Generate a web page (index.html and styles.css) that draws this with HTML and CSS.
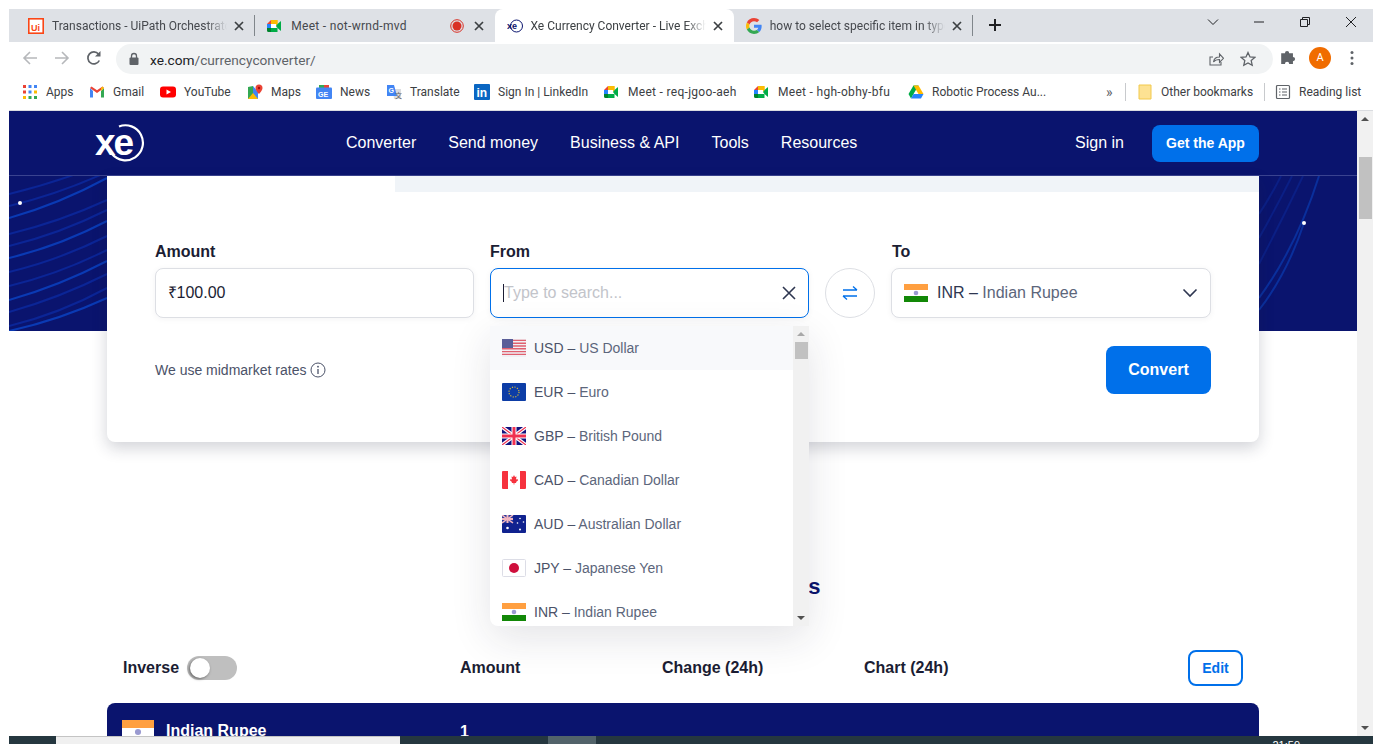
FILE: index.html
```html
<!DOCTYPE html>
<html lang="en">
<head>
  <meta charset="UTF-8">
  <title>Xe Currency Converter - Live Exchange Rates</title>
  <link rel="stylesheet" href="styles.css">
</head>
<body>
  <svg class="defs" width="0" height="0">
    <symbol id="meet" viewBox="0 0 16 16">
      <path fill="#fbbc04" d="M4 2h6.500v4H4z"/>
      <path fill="#ea4335" d="M4 2v4H0z"/>
      <path fill="#2684fc" d="M0 6h4v4H0z"/>
      <path fill="#00832d" d="M0 10h4v4H1.500A1.500 1.500 0 0 1 0 12.500z"/>
      <path fill="#00ac47" d="M4 10h6.500v4H4z"/>
      <path fill="#ffba00" d="M10.500 2v4l-1.500 2V3.500z"/>
      <path fill="#00ac47" d="M9 8l1.500-2 3.500-3v10l-3.500-3z"/>
      <path fill="#fff" d="M4 6h5v4H4z"/>
    </symbol>
    <symbol id="flag-in" viewBox="0 0 24 18">
      <rect width="24" height="6" fill="#ff9f40"/>
      <rect y="6" width="24" height="6" fill="#fff"/>
      <rect y="12" width="24" height="6" fill="#128807"/>
      <circle cx="12" cy="9" r="2.300" fill="#9a9ad0"/>
    </symbol>
    <symbol id="close" viewBox="0 0 12 12">
      <path d="M2 2l8 8M10 2l-8 8" fill="none" stroke="currentColor" stroke-width="1.700"/>
    </symbol>
    <symbol id="bar-up" viewBox="0 0 16 16"><path d="M4 10l4-4 4 4z" fill="#505050"/></symbol>
    <symbol id="bar-down" viewBox="0 0 16 16"><path d="M4 6l4 4 4-4z" fill="#505050"/></symbol>
  </svg>

  <div class="tabstrip">
    <div class="tab sep">
      <svg class="favicon" viewBox="0 0 16 16"><rect x=".8" y=".8" width="14.400" height="14.400" fill="#fff" stroke="#fa4616" stroke-width="1.600"/><text x="3" y="12.500" class="ui-mark">Ui</text></svg>
      <span class="tab-title">Transactions - UiPath Orchestrator</span>
      <svg class="tab-x"><use href="#close"/></svg>
    </div>
    <div class="tab">
      <svg class="favicon"><use href="#meet"/></svg>
      <span class="tab-title tab-title-short">Meet - not-wrnd-mvd</span>
      <svg class="rec" viewBox="0 0 14 14"><circle cx="7" cy="7" r="6.300" fill="none" stroke="#d93025"/><circle cx="7" cy="7" r="4.500" fill="#d93025"/></svg>
      <svg class="tab-x"><use href="#close"/></svg>
    </div>
    <div class="tab tab-active">
      <svg class="favicon" viewBox="0 0 16 16"><circle cx="9.500" cy="8" r="6" fill="none" stroke="#0a146e"/><text x="0" y="11" class="xe-mark">xe</text></svg>
      <span class="tab-title">Xe Currency Converter - Live Exchange Rates</span>
      <svg class="tab-x"><use href="#close"/></svg>
    </div>
    <div class="tab sep">
      <svg class="favicon" viewBox="0 0 48 48">
        <path fill="#EA4335" d="M24 9.500c3.540 0 6.710 1.220 9.210 3.600l6.850-6.850C35.900 2.380 30.470 0 24 0 14.620 0 6.510 5.380 2.560 13.220l7.980 6.190C12.430 13.720 17.740 9.500 24 9.500z"/>
        <path fill="#4285F4" d="M46.980 24.550c0-1.570-.15-3.090-.38-4.550H24v9.020h12.940c-.58 2.960-2.260 5.480-4.780 7.180l7.730 6c4.510-4.180 7.090-10.360 7.090-17.650z"/>
        <path fill="#FBBC05" d="M10.530 28.590c-.48-1.450-.76-2.990-.76-4.590s.27-3.140.76-4.590l-7.980-6.190C.92 16.460 0 20.120 0 24c0 3.880.92 7.540 2.560 10.780l7.970-6.190z"/>
        <path fill="#34A853" d="M24 48c6.480 0 11.930-2.130 15.890-5.810l-7.730-6c-2.150 1.450-4.920 2.300-8.160 2.300-6.260 0-11.570-4.220-13.470-9.910l-7.980 6.190C6.510 42.620 14.620 48 24 48z"/>
      </svg>
      <span class="tab-title">how to select specific item in typeahead</span>
      <svg class="tab-x"><use href="#close"/></svg>
    </div>
    <svg class="newtab" viewBox="0 0 14 14"><path d="M7 1v12M1 7h12" stroke="#202124" stroke-width="2"/></svg>
    <div class="winctl">
      <svg viewBox="0 0 12 12"><path d="M1 3.500l5 5 5-5" fill="none" stroke="#202124"/></svg>
      <svg viewBox="0 0 12 12"><path d="M1 6h10" stroke="#202124"/></svg>
      <svg viewBox="0 0 12 12"><path d="M1.500 3.500h7v7h-7zM3.500 3.500v-2h7v7h-2" fill="none" stroke="#202124"/></svg>
      <svg viewBox="0 0 12 12"><path d="M1 1l10 10M11 1L1 11" stroke="#202124"/></svg>
    </div>
  </div>

  <div class="toolbar">
    <svg class="nav-btn" viewBox="0 0 16 16"><path d="M15 8H2M8 2L2 8l6 6" fill="none" stroke="#b6b8bb" stroke-width="1.600"/></svg>
    <svg class="nav-btn" viewBox="0 0 16 16"><path d="M1 8h13M8 2l6 6-6 6" fill="none" stroke="#b6b8bb" stroke-width="1.600"/></svg>
    <svg class="nav-btn" viewBox="0 0 16 16"><path d="M13.300 10.500A6 6 0 1 1 12.500 4" fill="none" stroke="#5f6368" stroke-width="1.700"/><path d="M14.500 1v5.500H9z" fill="#5f6368"/></svg>
    <div class="omnibox">
      <svg class="lock" viewBox="0 0 12 14"><path d="M3.500 6V4a2.500 2.500 0 0 1 5 0v2" fill="none" stroke="#5f6368" stroke-width="1.300"/><rect x="1.500" y="5.500" width="9" height="7.500" rx="1" fill="#5f6368"/></svg>
      <span class="url"><b>xe.com</b>/currencyconverter/</span>
      <svg class="omni-icon" viewBox="0 0 16 16"><path d="M5 6H2v8h11v-3" fill="none" stroke="#5f6368" stroke-width="1.100"/><path d="M5.500 11c.5-3.500 3-5 6-5V3l4 4.300-4 4V8.500c-2.500 0-4.500 .5-6 2.500z" fill="none" stroke="#5f6368" stroke-width="1.100"/></svg>
      <svg class="omni-icon" viewBox="0 0 16 16"><path d="M8 1.500l2 4.400 4.800.5-3.600 3.200 1 4.700L8 11.900l-4.200 2.400 1-4.700L1.200 6.400 6 5.900z" fill="none" stroke="#5f6368" stroke-width="1.300"/></svg>
    </div>
    <svg class="ext" viewBox="0 0 16 16"><path d="M1 5h3.500a2 2 0 1 1 4 0H12v3.500a2 2 0 1 1 0 4V15H8.500a2 2 0 1 0-4 0H1z" fill="#5f6368" transform="translate(1 -1) scale(.95)"/></svg>
    <div class="avatar">A</div>
    <svg class="dots" viewBox="0 0 4 16"><circle cx="2" cy="2.500" r="1.500" fill="#5f6368"/><circle cx="2" cy="8" r="1.500" fill="#5f6368"/><circle cx="2" cy="13.500" r="1.500" fill="#5f6368"/></svg>
  </div>

  <div class="bookmarks">
    <div class="bm">
      <svg class="bm-ico" viewBox="0 0 16 16">
        <g fill="#ea4335"><rect x="1" y="1" width="3" height="3"/><rect x="1" y="6.500" width="3" height="3"/></g>
        <g fill="#4285f4"><rect x="6.500" y="1" width="3" height="3"/><rect x="12" y="1" width="3" height="3"/><rect x="6.500" y="6.500" width="3" height="3"/></g>
        <g fill="#fbbc04"><rect x="12" y="6.500" width="3" height="3"/><rect x="1" y="12" width="3" height="3"/></g>
        <g fill="#34a853"><rect x="6.500" y="12" width="3" height="3"/><rect x="12" y="12" width="3" height="3"/></g>
      </svg>Apps
    </div>
    <div class="bm">
      <svg class="bm-ico" viewBox="0 0 16 16"><path d="M1 4v9.500h3V7z" fill="#4285f4"/><path d="M12 7v6.500h3V4z" fill="#34a853"/><path d="M1 4l7 5 7-5-1.500-1.500L8 6.300 2.500 2.500z" fill="#ea4335"/><path d="M13.500 2.500L15 4l-3 3V4z" fill="#fbbc04"/></svg>Gmail
    </div>
    <div class="bm">
      <svg class="bm-ico" viewBox="0 0 16 16"><rect y="2.500" width="16" height="11" rx="3" fill="#f00"/><path d="M6.500 5.500v5L11 8z" fill="#fff"/></svg>YouTube
    </div>
    <div class="bm">
      <svg class="bm-ico" viewBox="0 0 16 16"><path d="M1 3l5-1v12l-5 1z" fill="#34a853"/><path d="M6 2v12l5 1V8z" fill="#4285f4"/><path d="M1 15l5-6 5 6z" fill="#fbbc04"/><path d="M12 .5a3.500 3.500 0 0 0-3.500 3.500c0 2.500 3.500 6 3.500 6s3.500-3.500 3.500-6A3.500 3.500 0 0 0 12 .5z" fill="#ea4335"/><circle cx="12" cy="4" r="1.200" fill="#a50e0e"/></svg>Maps
    </div>
    <div class="bm">
      <svg class="bm-ico" viewBox="0 0 16 16"><path d="M3 1h10v3H3z" fill="#34a853"/><path d="M8 1h5v3H8z" fill="#ea4335"/><rect y="3.500" width="16" height="11.500" rx="1" fill="#4285f4"/><text x="2" y="12.500" class="news-mark">GE</text></svg>News
    </div>
    <div class="bm">
      <svg class="bm-ico" viewBox="0 0 16 16"><path d="M7 5h8v10H8z" fill="#dadce0"/><path d="M1 1h7l3 11H1z" fill="#4285f4"/><text x="2.500" y="9" class="news-mark">G</text><text x="9" y="13.500" class="tr-mark">文</text></svg>Translate
    </div>
    <div class="bm">
      <svg class="bm-ico" viewBox="0 0 16 16"><rect width="16" height="16" rx="1" fill="#0a66c2"/><text x="2.500" y="13" class="in-mark">in</text></svg>Sign In | LinkedIn
    </div>
    <div class="bm bm-meet"><svg class="bm-ico"><use href="#meet"/></svg>Meet - req-jgoo-aeh</div>
    <div class="bm bm-meet"><svg class="bm-ico"><use href="#meet"/></svg>Meet - hgh-obhy-bfu</div>
    <div class="bm">
      <svg class="bm-ico" viewBox="0 0 16 16"><path d="M5.500 1.500h5L5.500 10 3 14.500 .5 10z" fill="#00ac47"/><path d="M5.500 1.500h5l5 8.500h-5z" fill="#ffba00"/><path d="M3 14.500L5.500 10h10L13 14.500z" fill="#2684fc"/></svg>Robotic Process Au...
    </div>
    <span class="bm-more">»</span>
    <span class="bm-sep"></span>
    <div class="bm"><svg class="bm-ico" viewBox="0 0 16 16"><path d="M2 1h12v14H2z" fill="#fde293" stroke="#f2c94c"/></svg>Other bookmarks</div>
    <span class="bm-sep"></span>
    <div class="bm"><svg class="bm-ico" viewBox="0 0 16 16"><rect x="1.500" y="1.500" width="13" height="13" rx="1" fill="none" stroke="#5f6368" stroke-width="1.200"/><path d="M4 5h1.500M7 5h5M4 8h1.500M7 8h5M4 11h1.500M7 11h5" stroke="#5f6368" stroke-width="1.200"/></svg>Reading list</div>
  </div>

  <div class="viewport">
    <div class="page">
      <header class="site-nav">
        <div class="logo">
          <span class="logo-text">xe</span>
          <svg class="logo-arc" viewBox="0 0 40 40"><path d="M13 2.500A17.500 17.500 0 1 1 6 30" fill="none" stroke="#fff" stroke-width="2.200"/></svg>
        </div>
        <nav class="nav-links">
          <a>Converter</a><a>Send money</a><a>Business &amp; API</a><a>Tools</a><a>Resources</a>
        </nav>
        <a class="sign-in">Sign in</a>
        <a class="get-app">Get the App</a>
      </header>

      <div class="hero">
        <svg class="hero-art" viewBox="0 0 1348 155" preserveAspectRatio="none">
          <g fill="none" stroke="#0b2596" stroke-width="2">
            <path d="M0 18Q50 6 98 -14"/><path d="M0 30Q50 18 98 -4"/>
            <path d="M0 58Q50 46 98 24"/><path d="M0 70Q50 58 98 34"/>
            <path d="M0 96Q50 84 98 60"/><path d="M0 110Q50 98 98 74"/>
            <path d="M0 136Q50 122 98 98"/><path d="M0 150Q50 138 98 112"/>
            <path d="M1250 38Q1262 20 1272 0" stroke="#0b1f85"/><path d="M1250 62Q1266 34 1283 0" stroke="#0b1f85"/><path d="M1250 88Q1272 46 1294 0" stroke="#0b1f85"/>
          </g>
          <g fill="none" stroke="#0a3ab4" stroke-width="2">
            <path d="M0 42Q50 28 98 2"/><path d="M0 82Q50 70 98 45"/><path d="M0 124Q50 110 98 85"/><path d="M0 155Q50 144 98 122"/>
          </g>
          <g fill="none" stroke="#0a2f9c" stroke-width="2">
            <path d="M1250 122Q1288 70 1310 0"/><path d="M1250 134Q1278 98 1295 47"/>
          </g>
          <circle cx="11" cy="27" r="2" fill="#fff"/>
          <circle cx="1295" cy="47" r="2" fill="#fff"/>
        </svg>
      </div>

      <main class="card">
        <div class="card-tabs"><span class="card-tab-on"></span><span class="card-tab-off"></span></div>
        <div class="card-body">
          <div class="form-row">
            <div class="field">
              <label class="field-label">Amount</label>
              <div class="field-box amount">₹100.00</div>
            </div>
            <div class="field from">
              <label class="field-label">From</label>
              <div class="field-box focused">
                <span class="caret"></span>
                <span class="placeholder">Type to search...</span>
                <svg class="clear" viewBox="0 0 14 14"><path d="M1 1l12 12M13 1L1 13" fill="none" stroke="#2e3650" stroke-width="1.600"/></svg>
              </div>
              <div class="menu">
                <ul class="menu-list">
                  <li class="menu-item menu-item-hover">
                    <svg class="flag" viewBox="0 0 24 18">
                      <rect width="24" height="18" fill="#f0f0f4"/>
                      <path d="M0 1.400h24M0 4.200h24M0 7h24M0 9.800h24M0 12.600h24M0 15.400h24" stroke="#e0606f" stroke-width="1.400"/>
                      <rect width="11" height="9" fill="#5a5e98"/>
                    </svg>
                    <span class="cur"><span class="cur-code">USD – </span>US Dollar</span>
                  </li>
                  <li class="menu-item">
                    <svg class="flag" viewBox="0 0 24 18">
                      <rect width="24" height="18" rx="1" fill="#0d3da6"/>
                      <circle cx="12" cy="9" r="5" fill="none" stroke="#d6b93a" stroke-width="1.200" stroke-dasharray="1.200 1.400"/>
                    </svg>
                    <span class="cur"><span class="cur-code">EUR – </span>Euro</span>
                  </li>
                  <li class="menu-item">
                    <svg class="flag" viewBox="0 0 24 18">
                      <rect width="24" height="18" fill="#12127e"/>
                      <path d="M0 0l24 18M24 0L0 18" stroke="#fff" stroke-width="3.500"/>
                      <path d="M0 0l24 18M24 0L0 18" stroke="#f03050" stroke-width="1.200"/>
                      <path d="M12 0v18M0 9h24" stroke="#fff" stroke-width="5"/>
                      <path d="M12 0v18M0 9h24" stroke="#f03050" stroke-width="3"/>
                    </svg>
                    <span class="cur"><span class="cur-code">GBP – </span>British Pound</span>
                  </li>
                  <li class="menu-item">
                    <svg class="flag" viewBox="0 0 24 18">
                      <rect width="24" height="18" rx="1" fill="#fff"/>
                      <path d="M0 1a1 1 0 0 1 1-1h5v18H1a1 1 0 0 1-1-1zM18 0h5a1 1 0 0 1 1 1v16a1 1 0 0 1-1 1h-5z" fill="#f6323e"/>
                      <path d="M12 4l1 2 1.500-.5-.5 3 1.500-.5 .5 1.500-2 1.500.3 1H12.400v1.500h-.8V12H9.700l.3-1-2-1.500.5-1.500 1.500.5-.5-3L11 6z" fill="#f6323e"/>
                    </svg>
                    <span class="cur"><span class="cur-code">CAD – </span>Canadian Dollar</span>
                  </li>
                  <li class="menu-item">
                    <svg class="flag" viewBox="0 0 24 18">
                      <rect width="24" height="18" rx="1" fill="#10228f"/>
                      <rect width="11" height="8" fill="#2a3a9c"/>
                      <path d="M0 0l11 8M11 0L0 8" stroke="#f3b6c0" stroke-width="1.500"/>
                      <path d="M5.500 0v8M0 4h11" stroke="#f3b6c0" stroke-width="2"/>
                      <g fill="#fff"><circle cx="5.500" cy="13" r="1.300"/><circle cx="18" cy="3.500" r=".8"/><circle cx="21.500" cy="7" r=".8"/><circle cx="15.500" cy="8" r=".8"/><circle cx="18" cy="14.500" r="1"/></g>
                    </svg>
                    <span class="cur"><span class="cur-code">AUD – </span>Australian Dollar</span>
                  </li>
                  <li class="menu-item">
                    <svg class="flag" viewBox="0 0 24 18">
                      <rect x=".5" y=".5" width="23" height="17" rx="1" fill="#fff" stroke="#dcdde6"/>
                      <circle cx="12" cy="9" r="5" fill="#cf0f3c"/>
                    </svg>
                    <span class="cur"><span class="cur-code">JPY – </span>Japanese Yen</span>
                  </li>
                  <li class="menu-item">
                    <svg class="flag"><use href="#flag-in"/></svg>
                    <span class="cur"><span class="cur-code">INR – </span>Indian Rupee</span>
                  </li>
                </ul>
                <div class="menu-bar">
                  <svg class="bar-btn bar-btn-off"><use href="#bar-up"/></svg>
                  <span class="menu-thumb"></span>
                  <svg class="bar-btn bar-btn-end"><use href="#bar-down"/></svg>
                </div>
              </div>
            </div>
            <button class="swap">
              <svg viewBox="0 0 18 18"><path d="M2 6h14M12 2.500L16 6M16 12H2M2 12l4 3.500" fill="none" stroke="#0070ea" stroke-width="1.300"/></svg>
            </button>
            <div class="field">
              <label class="field-label field-label-to">To</label>
              <div class="field-box to">
                <svg class="flag"><use href="#flag-in"/></svg>
                <span class="to-cur"><span class="to-code">INR – </span>Indian Rupee</span>
                <svg class="chevron" viewBox="0 0 16 10"><path d="M1.500 1.500L8 8l6.500-6.500" fill="none" stroke="#2e3650" stroke-width="1.600"/></svg>
              </div>
            </div>
          </div>
          <div class="action-row">
            <span class="rates-note">We use midmarket rates
              <svg class="info" viewBox="0 0 16 16"><circle cx="8" cy="8" r="7" fill="none" stroke="#4b5268"/><path d="M8 7v5" stroke="#4b5268" stroke-width="1.300"/><circle cx="8" cy="4.700" r=".9" fill="#4b5268"/></svg>
            </span>
            <button class="convert">Convert</button>
          </div>
        </div>
      </main>

      <h2 class="rates-title">Xe Live Exchange Rates</h2>

      <section class="rates">
        <div class="rates-grid rates-head">
          <div class="inverse">Inverse <span class="toggle"><span class="knob"></span></span></div>
          <div>Amount</div>
          <div>Change (24h)</div>
          <div>Chart (24h)</div>
          <div class="edit-cell"><button class="edit">Edit</button></div>
        </div>
        <div class="rates-grid rates-row">
          <div class="base-cur"><svg class="base-flag"><use href="#flag-in"/></svg><span class="base-name">Indian Rupee</span></div>
          <div class="base-amount">1</div>
        </div>
      </section>
    </div>
    <div class="scrollbar">
      <svg class="bar-btn"><use href="#bar-up"/></svg>
      <span class="thumb"></span>
      <svg class="bar-btn bar-btn-end"><use href="#bar-down"/></svg>
    </div>
  </div>

  <div class="taskbar">
    <span class="task-search"></span>
    <span class="task-active"></span>
    <span class="task-time">21:59</span>
  </div>
</body>
</html>
```

FILE: styles.css
```css
* {
  box-sizing: border-box;
}

html, body {
  margin: 0;
  height: 744px;
  overflow: hidden;
}

body {
  padding: 9px 9px 0;
  background: #fff;
  font-family: "Liberation Sans", Arial, sans-serif;
  color: #1b1d33;
  display: flex;
  flex-direction: column;
}

.defs {
  position: absolute;
}

/* browser chrome */
.tabstrip {
  height: 33px;
  flex: none;
  background: #dee1e6;
  display: flex;
  padding-left: 7px;
  font-family: Roboto, sans-serif;
  font-size: 12px;
  color: #45484d;
}

.tab {
  width: 239.250px;
  flex: none;
  display: flex;
  align-items: center;
  padding: 0 10px 0 12px;
  position: relative;
}

.tab.sep::after {
  content: "";
  position: absolute;
  right: 0;
  top: 6px;
  height: 21px;
  border-right: 1px solid #80868b;
}

.tab-active {
  background: #fff;
  border-radius: 8px 8px 0 0;
  color: #3c4043;
}

.favicon {
  width: 16px;
  height: 16px;
  flex: none;
  margin-right: 8px;
}

.ui-mark {
  font: bold 9px "Liberation Sans", sans-serif;
  fill: #fa4616;
}

.xe-mark {
  font: bold 9px "Liberation Sans", sans-serif;
  fill: #0a146e;
}

.tab-title {
  flex: 1;
  min-width: 0;
  white-space: nowrap;
  overflow: hidden;
  -webkit-mask-image: linear-gradient(to right, #000 88%, transparent);
  mask-image: linear-gradient(to right, #000 88%, transparent);
}

.tab-title-short {
  letter-spacing: 0.3px;
  -webkit-mask-image: none;
  mask-image: none;
}

.rec {
  width: 14px;
  height: 14px;
  flex: none;
  margin-right: 3px;
}

.tab-x {
  width: 12px;
  height: 12px;
  flex: none;
  margin-left: 6px;
  color: #3c4043;
}

.newtab {
  width: 14px;
  height: 14px;
  margin: 9px 0 0 15px;
}

.winctl {
  margin-left: auto;
  display: flex;
  gap: 34px;
  padding: 7px 16px 0 0;
}

.winctl svg {
  width: 12px;
  height: 12px;
}

.toolbar {
  height: 32px;
  flex: none;
  display: flex;
  align-items: center;
  padding-left: 13px;
  background: #fff;
}

.nav-btn {
  width: 16px;
  height: 16px;
  flex: none;
  margin-right: 16px;
}

.omnibox {
  width: 1157px;
  height: 30px;
  margin: 2px 0 0 -2px;
  background: #f1f3f4;
  border-radius: 15px;
  display: flex;
  align-items: center;
  padding: 0 17px 0 12px;
}

.lock {
  width: 12px;
  height: 14px;
  margin-right: 10px;
}

.url {
  flex: 1;
  font-family: Roboto, sans-serif;
  font-size: 13.700px;
  line-height: 17px;
  padding-top: 2px;
  color: #5f6368;
}

.url b {
  font-weight: 400;
  color: #202124;
}

.omni-icon {
  width: 16px;
  height: 16px;
  margin-left: 16px;
}

.ext {
  width: 18px;
  height: 18px;
  margin-left: 6px;
}

.avatar {
  width: 22px;
  height: 22px;
  border-radius: 50%;
  background: #f06c00;
  color: #fff;
  font-family: Roboto, sans-serif;
  font-size: 11px;
  line-height: 22px;
  text-align: center;
  margin-left: 12px;
}

.dots {
  width: 4px;
  height: 16px;
  margin-left: 19px;
}

.bookmarks {
  height: 37px;
  flex: none;
  display: grid;
  grid-template-columns: 67px 71px 87px 69px 70px 88px 130px 150px 154px 198px 19px 12px 127px 11px auto;
  align-items: center;
  padding-left: 13px;
  background: #fff;
  border-bottom: 1px solid #dadce0;
  font-family: Roboto, sans-serif;
  font-size: 12px;
  color: #3c4043;
}

.bm {
  display: flex;
  align-items: center;
  gap: 8px;
  white-space: nowrap;
}

.bm-meet {
  letter-spacing: 0.3px;
}

.bm-ico {
  width: 16px;
  height: 16px;
  flex: none;
}

.news-mark {
  font: bold 7px "Liberation Sans", sans-serif;
  fill: #fff;
}

.tr-mark {
  font: 7px "Noto Sans CJK SC", sans-serif;
  fill: #5f6368;
}

.in-mark {
  font: bold 12px "Liberation Sans", sans-serif;
  fill: #fff;
}

.bm-more {
  font-size: 14px;
  color: #5f6368;
}

.bm-sep {
  width: 1px;
  height: 18px;
  background: #c8cacd;
}

/* page */
.viewport {
  flex: 1;
  min-height: 0;
  display: flex;
}

.page {
  flex: 1;
  min-width: 0;
  overflow: hidden;
  background: #fff;
}

.scrollbar {
  width: 16px;
  flex: none;
  background: #f1f1f1;
  display: flex;
  flex-direction: column;
  align-items: center;
}

.bar-btn {
  width: 16px;
  height: 16px;
  flex: none;
}

.bar-btn-off {
  opacity: 0.45;
}

.bar-btn-end {
  margin-top: auto;
}

.thumb {
  width: 13px;
  height: 62px;
  margin-top: 30px;
  background: #c1c1c1;
}

.site-nav {
  height: 65px;
  background: #0a146e;
  border-bottom: 1px solid #3a4390;
  display: flex;
  align-items: center;
  padding: 0 98px 0 86px;
  color: #fff;
}

.logo {
  width: 50px;
  height: 40px;
  margin-top: 2px;
  position: relative;
}

.logo-text {
  font-size: 37px;
  font-weight: 700;
  line-height: 38px;
  letter-spacing: -2px;
}

.logo-arc {
  position: absolute;
  left: 11px;
  top: 0;
  width: 40px;
  height: 40px;
}

.nav-links {
  display: flex;
  gap: 32px;
  margin-left: 201px;
  font-size: 16px;
}

.sign-in {
  margin-left: auto;
  font-size: 16px;
}

.get-app {
  width: 107px;
  height: 37px;
  margin-left: 28px;
  border-radius: 8px;
  background: #0070ea;
  font-size: 14px;
  font-weight: 700;
  line-height: 37px;
  text-align: center;
}

.hero {
  height: 155px;
  background: #0a146e;
}

.hero-art {
  display: block;
  width: 100%;
  height: 100%;
}

.card {
  width: 1152px;
  margin: -155px auto 0;
  background: #fff;
  border-radius: 0 0 8px 8px;
  box-shadow: 0 6px 16px rgba(30, 35, 60, 0.2);
  position: relative;
}

.card-tabs {
  display: flex;
  height: 16px;
}

.card-tab-on {
  width: 288px;
  background: #fff;
}

.card-tab-off {
  flex: 1;
  background: #f0f4f8;
}

.card-body {
  padding: 51px 48px 48px;
}

.form-row {
  display: grid;
  grid-template-columns: 319px 319px 50px 1fr;
  gap: 16px;
  align-items: end;
}

.field {
  position: relative;
}

.field-label {
  display: block;
  margin-bottom: 8px;
  font-size: 16px;
  font-weight: 700;
  line-height: 17px;
}

.field-label-to {
  padding-left: 1px;
}

.field-box {
  height: 50px;
  display: flex;
  align-items: center;
  padding: 0 12px;
  background: #fff;
  border: 1px solid #dddfe4;
  border-radius: 8px;
  box-shadow: 0 1px 6px rgba(30, 35, 60, 0.05);
  font-size: 16px;
}

.field-box.amount {
  padding: 0 12px 2px 11.500px;
}

.field-box.focused {
  border-color: #0070ea;
}

.caret {
  width: 1px;
  height: 18px;
  background: #1b1d33;
}

.placeholder {
  flex: 1;
  color: #c2c4ca;
}

.clear {
  width: 14px;
  height: 14px;
}

.menu {
  position: absolute;
  left: 0;
  top: 83px;
  width: 319px;
  height: 300px;
  display: flex;
  background: #fff;
  border-radius: 0 0 0 8px;
  box-shadow: 0 12px 40px rgba(30, 35, 60, 0.12);
  overflow: hidden;
  z-index: 2;
}

.menu-list {
  flex: 1;
  margin: 0;
  padding: 0;
  list-style: none;
  overflow: hidden;
}

.menu-item {
  height: 44px;
  display: flex;
  align-items: center;
  gap: 8px;
  padding-left: 12px;
  font-size: 14px;
  color: #5c667b;
}

.menu-item-hover {
  background: #f8f9fb;
}

.flag {
  width: 24px;
  height: 18px;
  flex: none;
}

.cur-code {
  color: #4b5268;
}

.menu-bar {
  width: 16px;
  flex: none;
  background: #f1f1f1;
  display: flex;
  flex-direction: column;
  align-items: center;
}

.menu-thumb {
  width: 13px;
  height: 17px;
  background: #c1c1c1;
}

.swap {
  width: 50px;
  height: 50px;
  padding: 15px;
  background: #fff;
  border: 1px solid #dddfe4;
  border-radius: 50%;
}

.swap svg {
  display: block;
  width: 18px;
  height: 18px;
}

.to {
  gap: 9px;
  padding-right: 12px;
}

.to-cur {
  flex: 1;
  color: #5c667b;
}

.to-code {
  color: #2e3650;
}

.chevron {
  width: 16px;
  height: 10px;
}

.action-row {
  display: flex;
  align-items: center;
  justify-content: space-between;
  margin-top: 28px;
}

.rates-note {
  display: flex;
  align-items: center;
  gap: 4px;
  font-size: 14px;
  color: #4b5268;
}

.info {
  width: 16px;
  height: 16px;
}

.convert {
  width: 105px;
  height: 48px;
  border: none;
  border-radius: 8px;
  background: #0070ea;
  color: #fff;
  font-family: inherit;
  font-size: 16px;
  font-weight: 700;
}

.rates-title {
  margin: 131px 0 0;
  padding-left: 22px;
  font-size: 22px;
  line-height: 28px;
  text-align: center;
  color: #0a146e;
}

.rates {
  width: 1152px;
  margin: 49px auto 0;
}

.rates-grid {
  display: grid;
  grid-template-columns: 337px 202px 202px 1fr;
  padding: 0 16px;
  font-weight: 700;
  font-size: 16px;
}

.rates-head {
  height: 36px;
  align-items: center;
}

.rates-grid.rates-head {
  grid-template-columns: 337px 202px 202px 1fr 55px;
}

.inverse {
  display: flex;
  align-items: center;
  gap: 8px;
}

.toggle {
  width: 50px;
  height: 24px;
  padding: 2px 3px;
  background: #bfbfbf;
  border-radius: 12px;
}

.knob {
  display: block;
  width: 20px;
  height: 20px;
  border-radius: 50%;
  background: #fff;
  box-shadow: -1px 1px 3px rgba(0, 0, 0, 0.5);
}

.edit-cell {
  grid-column: 5;
  display: flex;
  justify-content: flex-end;
}

.edit {
  width: 55px;
  height: 36px;
  padding: 0;
  background: #fff;
  border: 2px solid #0070ea;
  border-radius: 8px;
  color: #0070ea;
  font-family: inherit;
  font-size: 14px;
  font-weight: 700;
}

.rates-row {
  margin-top: 17px;
  height: 60px;
  padding-top: 17px;
  background: #0a146e;
  border-radius: 8px 8px 0 0;
  color: #fff;
}

.base-cur {
  display: flex;
  align-items: flex-start;
  gap: 12px;
  margin-left: -1px;
  line-height: 20px;
}

.base-name {
  padding-top: 1px;
}

.base-amount {
  padding-top: 2px;
  line-height: 20px;
}

.base-flag {
  width: 32px;
  height: 24px;
  flex: none;
}

/* windows taskbar, only the top few pixels are on screen */
.taskbar {
  height: 8px;
  flex: none;
  background: #25373f;
  display: flex;
  padding-left: 47px;
  overflow: hidden;
}

.task-search {
  width: 344px;
  background: #f0f0f0;
  border-top: 1px solid #c4c4c4;
}

.task-active {
  width: 48px;
  margin-left: 148px;
  background: #52636a;
}

.task-time {
  margin-left: auto;
  margin-right: 73px;
  padding-top: 3px;
  font-size: 11px;
  line-height: 13px;
  color: #fff;
}
```
